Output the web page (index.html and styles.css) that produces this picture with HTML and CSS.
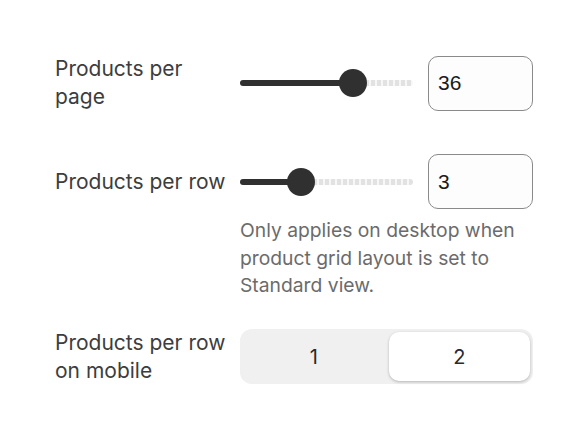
FILE: index.html
```html
<!DOCTYPE html>
<html lang="en">
<head>
    <meta charset="UTF-8">
    <meta name="viewport" content="width=device-width, initial-scale=1.0">
    <title>Product grid</title>
    <link rel="stylesheet" href="styles.css">
</head>
<body>
    <div class="settings">
        <div class="setting">
            <label class="label" for="perPage">Products per page</label>
            <div class="range-field">
                <div class="slider">
                    <div class="fill" style="width: 113px;"></div>
                    <div class="rest"></div>
                    <span class="thumb" style="left: 99px;"></span>
                </div>
                <input class="number" id="perPage" type="text" value="36">
            </div>
        </div>

        <div class="setting">
            <label class="label" for="perRow">Products per row</label>
            <div class="range-field">
                <div class="slider">
                    <div class="fill" style="width: 61px;"></div>
                    <div class="rest"></div>
                    <span class="thumb" style="left: 47px;"></span>
                </div>
                <input class="number" id="perRow" type="text" value="3">
            </div>
            <p class="help">Only applies on desktop when product grid layout is set to Standard view.</p>
        </div>

        <div class="setting">
            <span class="label">Products per row on mobile</span>
            <div class="segmented">
                <button class="segment">1</button>
                <button class="segment active">2</button>
            </div>
        </div>
    </div>
</body>
</html>
```

FILE: styles.css
```css
body {
    margin: 0;
    padding: 0;
    background-color: #ffffff;
    font-family: Inter, "Noto Sans", sans-serif;
    color: #3a3a3a;
}

.settings {
    display: flex;
    flex-direction: column;
    padding: 55px 51px 0 55px;
}

.setting {
    display: grid;
    grid-template-columns: 172px 1fr;
    column-gap: 13px;
    align-items: center;
}

    .setting + .setting {
        margin-top: 43px;
    }

    .setting:last-child {
        margin-top: 29px;
    }

.label {
    font-size: 21px;
    line-height: 28px;
    color: #3d3d3d;
}

.range-field {
    display: flex;
    align-items: center;
    gap: 15px;
}

.slider {
    position: relative;
    flex: 1;
    height: 28px;
    display: flex;
    align-items: center;
}

    .slider .fill {
        height: 6px;
        background-color: #303030;
        border-radius: 3px 0 0 3px;
    }

    .slider .rest {
        flex: 1;
        height: 6px;
        border-radius: 0 3px 3px 0;
        background: repeating-linear-gradient(to right, #e2e2e2 0, #e2e2e2 4px, #f7f7f7 4px, #f7f7f7 6px);
    }

    .slider .thumb {
        position: absolute;
        top: 0;
        width: 28px;
        height: 28px;
        border-radius: 50%;
        background-color: #303030;
    }

.number {
    box-sizing: border-box;
    width: 105px;
    height: 55px;
    padding: 0 9px;
    border: 1px solid #8a8a8a;
    border-radius: 10px;
    background-color: #fdfdfd;
    font-family: "Liberation Sans", Arial, sans-serif;
    font-size: 21px;
    color: #1a1a1a;
    outline: none;
}

.help {
    grid-column: 2;
    margin: 8px 0 0;
    font-size: 19.3px;
    line-height: 27.5px;
    color: #6b6b6b;
}

.segmented {
    display: grid;
    grid-template-columns: 1fr 1fr;
    gap: 4px;
    height: 55px;
    padding: 3px;
    box-sizing: border-box;
    border-radius: 12px;
    background-color: #f0f0f0;
}

.segment {
    border: none;
    border-radius: 10px;
    background: transparent;
    font-family: Inter, "Noto Sans", sans-serif;
    font-size: 20px;
    color: #2a2a2a;
    cursor: pointer;
}

    .segment.active {
        background-color: #ffffff;
        box-shadow: 0 1px 3px rgba(0, 0, 0, 0.25);
    }
```
